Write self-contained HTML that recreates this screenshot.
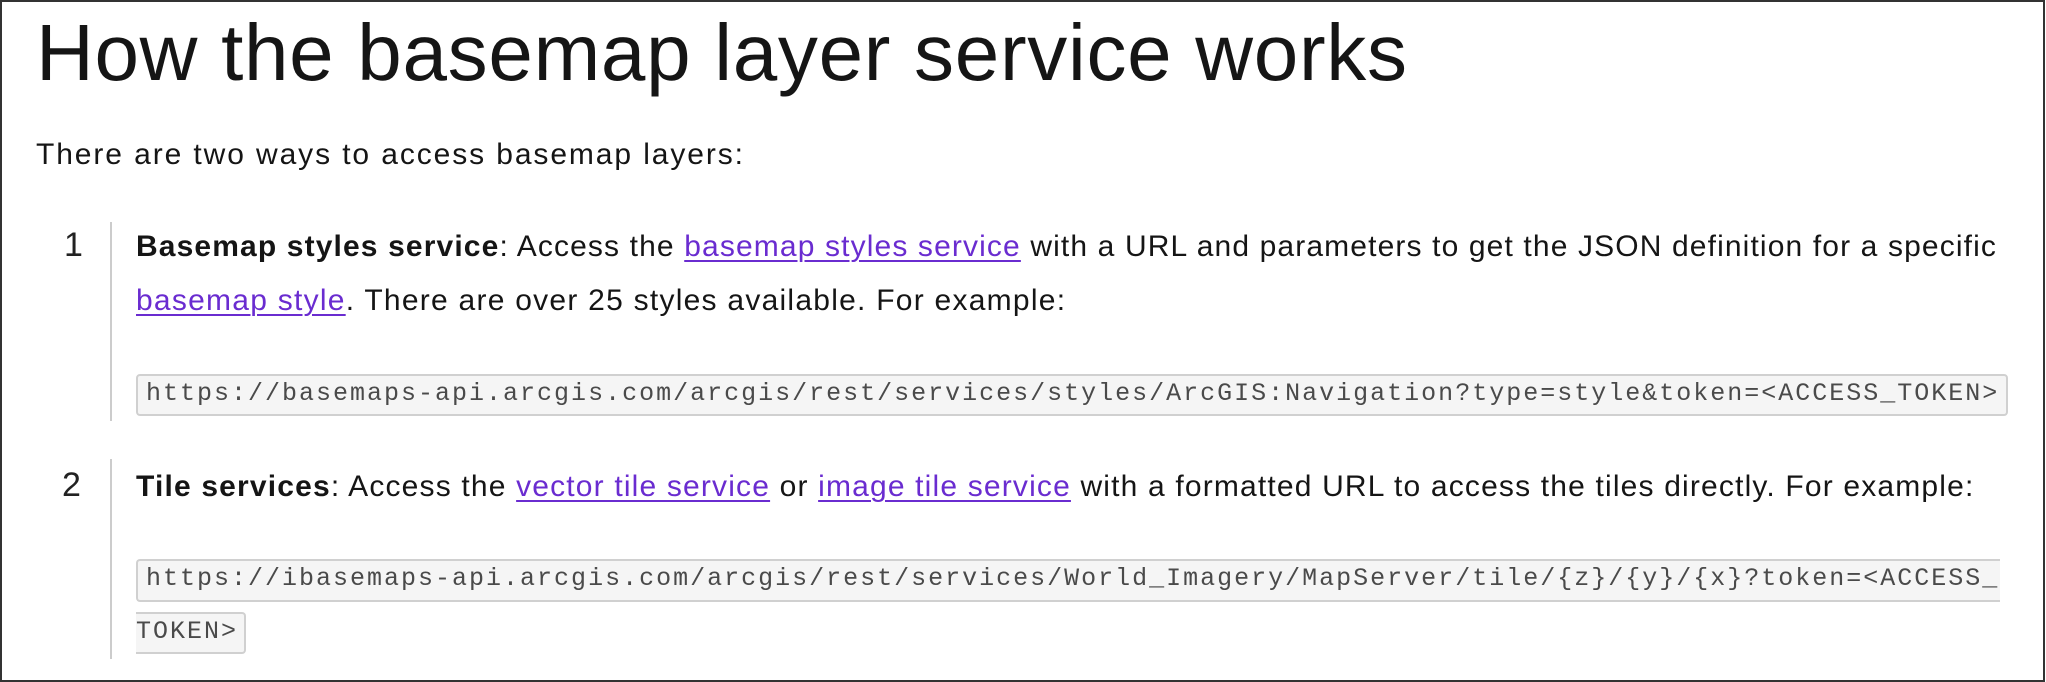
<!DOCTYPE html>
<html><head><meta charset="utf-8"><style>
html,body{margin:0;padding:0;background:#fff}
body{width:2046px;height:682px;position:relative;overflow:hidden;font-family:"Liberation Sans",sans-serif;color:#151515}
.frame{position:absolute;left:0;top:0;width:2041px;height:678px;border:2px solid #333}
.l{position:absolute;white-space:nowrap}
h1{position:absolute;left:36px;top:13px;margin:0;font-weight:normal;font-size:80px;line-height:80px;white-space:nowrap;letter-spacing:0.7px}
.t{font-size:30px;line-height:30px;letter-spacing:1.25px}
a{color:#6a2cd0;text-decoration:underline;text-decoration-thickness:2px;text-underline-offset:4px}
.num{position:absolute;font-size:34px;line-height:34px;color:#222}
.bar{position:absolute;left:110px;width:2px;background:#ccc}
.code{position:absolute;background:#f5f5f5;border:2px solid #d0d0d0;border-radius:4px;font-family:"Liberation Mono",monospace;font-size:25px;line-height:36px;color:#4a4a4a;letter-spacing:2px;white-space:nowrap;box-sizing:border-box;padding-left:8px}
</style></head><body>
<div class="frame"></div>
<h1>How the basemap layer service works</h1>
<div class="l t" style="left:36px;top:140px;letter-spacing:1.9px">There are two ways to access basemap layers:</div>

<div class="num" style="left:64px;top:228px">1</div>
<div class="bar" style="top:222px;height:199px"></div>
<div class="l t" style="left:136px;top:232px;letter-spacing:1.13px"><b>Basemap styles service</b>: Access the <a>basemap styles service</a> with a URL and parameters to get the JSON definition for a specific</div>
<div class="l t" style="left:136px;top:286px"><a>basemap style</a>. There are over 25 styles available. For example:</div>
<div class="code" style="left:136px;top:374px;width:1872px;height:42px">https://basemaps-api.arcgis.com/arcgis/rest/services/styles/ArcGIS:Navigation?type=style&amp;token=&lt;ACCESS_TOKEN&gt;</div>

<div class="num" style="left:62px;top:468px">2</div>
<div class="bar" style="top:459px;height:200px"></div>
<div class="l t" style="left:136px;top:472px;letter-spacing:1.17px"><b>Tile services</b>: Access the <a>vector tile service</a> or <a>image tile service</a> with a formatted URL to access the tiles directly. For example:</div>
<div class="code" style="left:136px;top:559px;width:1864px;height:43px;border-right:none;border-radius:4px 0 0 4px;overflow:hidden">https://ibasemaps-api.arcgis.com/arcgis/rest/services/World_Imagery/MapServer/tile/{z}/{y}/{x}?token=&lt;ACCESS_</div>
<div class="code" style="left:136px;top:612px;width:110px;height:42px;border-left:none;border-radius:0 4px 4px 0;padding-left:0">TOKEN&gt;</div>
</body></html>
